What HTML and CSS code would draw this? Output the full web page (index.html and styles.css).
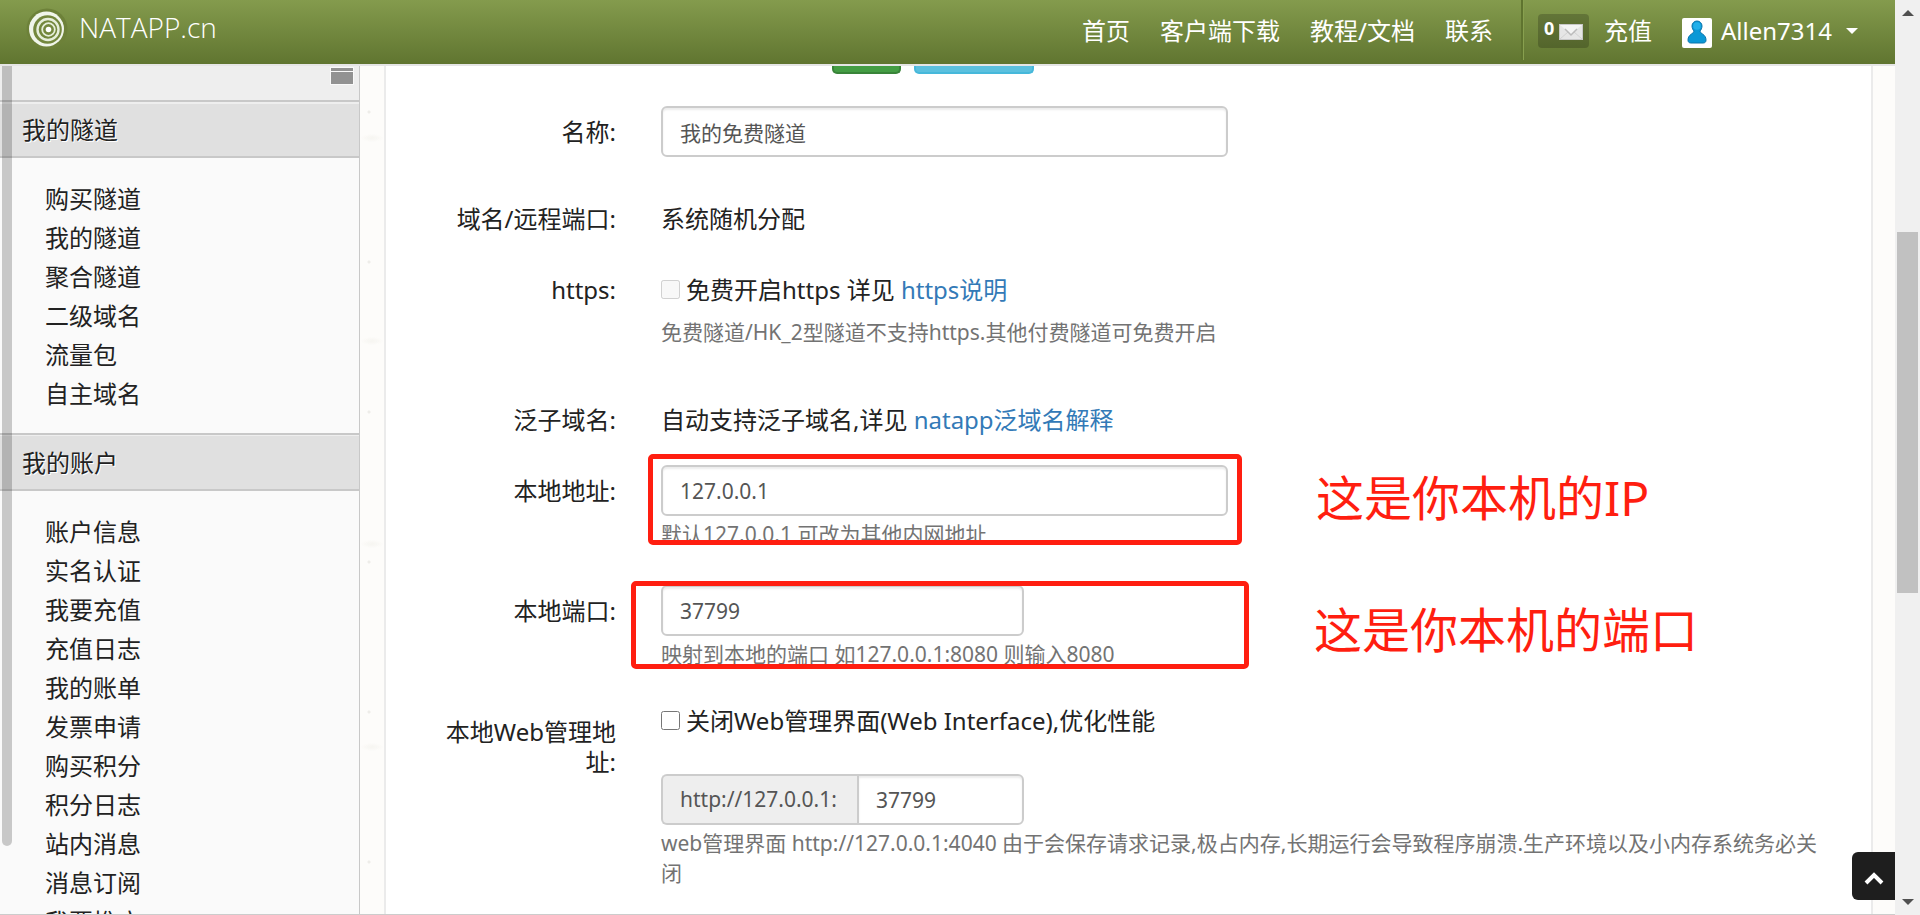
FILE: index.html
```html
<!DOCTYPE html>
<html lang="zh-CN">
<head>
<meta charset="utf-8">
<title>NATAPP.cn</title>
<link rel="stylesheet" href="styles.css">
</head>
<body>
<div class="page">
  <header class="navbar">
    <a class="brand" href="#">
      <svg class="brand-logo" viewBox="0 0 42 42" aria-hidden="true">
        <circle cx="21" cy="21" r="20.5" fill="#6d8139"/>
        <circle cx="20.500" cy="21" r="17.500" fill="#f0f5ea"/>
        <circle cx="21.500" cy="21.500" r="14.300" fill="#73873d"/>
        <circle cx="22" cy="21.500" r="10.500" fill="none" stroke="#e6eedb" stroke-width="2.400"/>
        <circle cx="22.500" cy="21.500" r="6.300" fill="none" stroke="#e6eedb" stroke-width="1.800"/>
        <circle cx="22.500" cy="21.500" r="2.800" fill="#fff"/>
      </svg>
      <span class="brand-name">NATAPP.cn</span>
    </a>
    <nav class="nav-links">
      <a href="#">首页</a>
      <a href="#">客户端下载</a>
      <a href="#">教程/文档</a>
      <a href="#">联系</a>
    </nav>
    <div class="user-area">
      <a class="mail-badge" href="#"><span>0</span>
        <svg class="mail-icon" viewBox="0 0 24 16" aria-hidden="true">
          <rect x="0.500" y="0.500" width="23" height="15" fill="#e6e6e6" stroke="#c8c8c8"/>
          <path d="M1 15 9 8M23 15l-8-7" stroke="#d2d2d2" fill="none"/>
          <path d="M1 1l11 9L23 1z" fill="#f4f4f4"/>
          <path d="M6 5l6 6 6-6" stroke="#bbb" stroke-width="1.500" fill="none"/>
        </svg>
      </a>
      <a class="recharge" href="#">充值</a>
      <button class="user-menu" type="button">
        <svg class="avatar" viewBox="0 0 30 30" aria-hidden="true">
          <rect width="30" height="30" rx="2" fill="#fff"/>
          <path d="M10 8a5 5 0 0 1 10 0c0 2-1 4-2 5 0 3 6 3 6 9 0 2-1 3-3 3H9c-2 0-3-1-3-3 0-6 6-6 6-9-1-1-2-3-2-5z" fill="#0a98d6" stroke="#0874ac"/>
          <circle cx="15" cy="8" r="3.800" fill="#22b0ea"/>
        </svg>
        <span>Allen7314</span>
        <svg class="caret" viewBox="0 0 12 6" aria-hidden="true"><path d="M0 0h12L6 6z" fill="#fff"/></svg>
      </button>
    </div>
  </header>

  <div class="body-row">
    <aside class="sidebar">
      <div class="sidebar-top">
        <svg class="panel-icon" viewBox="0 0 24 18" aria-hidden="true">
          <rect width="24" height="18" fill="#f9f9f9"/>
          <path d="M1 1h22v3H1zM1 5h22v12H1z" fill="#929292"/>
        </svg>
      </div>
      <h2 class="side-title">我的隧道</h2>
      <ul class="side-list">
        <li><a href="#">购买隧道</a></li>
        <li><a href="#">我的隧道</a></li>
        <li><a href="#">聚合隧道</a></li>
        <li><a href="#">二级域名</a></li>
        <li><a href="#">流量包</a></li>
        <li><a href="#">自主域名</a></li>
      </ul>
      <h2 class="side-title ruled">我的账户</h2>
      <ul class="side-list">
        <li><a href="#">账户信息</a></li>
        <li><a href="#">实名认证</a></li>
        <li><a href="#">我要充值</a></li>
        <li><a href="#">充值日志</a></li>
        <li><a href="#">我的账单</a></li>
        <li><a href="#">发票申请</a></li>
        <li><a href="#">购买积分</a></li>
        <li><a href="#">积分日志</a></li>
        <li><a href="#">站内消息</a></li>
        <li><a href="#">消息订阅</a></li>
        <li><a href="#">我要推广</a></li>
      </ul>
      <div class="side-thumb"></div>
    </aside>

    <main class="content">
      <form class="form">
        <div class="top-buttons">
          <button class="btn btn-green" type="button" aria-label="付费"></button>
          <button class="btn btn-blue" type="button" aria-label="购买"></button>
        </div>

        <div class="row row-name">
          <label class="label label-input" for="name">名称:</label>
          <div class="field"><input class="text wide" id="name" type="text" value="我的免费隧道"></div>
        </div>

        <div class="row row-domain">
          <span class="label">域名/远程端口:</span>
          <div class="field">系统随机分配</div>
        </div>

        <div class="row row-https">
          <label class="label" for="https">https:</label>
          <div class="field">
            <div class="check"><input id="https" type="checkbox" disabled><span>免费开启https 详见 <a href="#">https说明</a></span></div>
            <p class="help help-far">免费隧道/HK_2型隧道不支持https.其他付费隧道可免费开启</p>
          </div>
        </div>

        <div class="row row-wild">
          <span class="label">泛子域名:</span>
          <div class="field">自动支持泛子域名,详见 <a href="#">natapp泛域名解释</a></div>
        </div>

        <div class="row row-addr">
          <label class="label label-input" for="addr">本地地址:</label>
          <div class="field">
            <input class="text wide" id="addr" type="text" value="127.0.0.1">
            <p class="help">默认127.0.0.1 可改为其他内网地址</p>
            <div class="mark mark-addr"></div>
            <div class="note note-addr">这是你本机的IP</div>
          </div>
        </div>

        <div class="row row-port">
          <label class="label label-input" for="port">本地端口:</label>
          <div class="field">
            <input class="text narrow" id="port" type="text" value="37799">
            <p class="help">映射到本地的端口 如127.0.0.1:8080 则输入8080</p>
            <div class="mark mark-port"></div>
            <div class="note note-port">这是你本机的端口</div>
          </div>
        </div>

        <div class="row row-web">
          <label class="label label-input" for="webport">本地Web管理地址:</label>
          <div class="field">
            <div class="check"><input id="noweb" type="checkbox"><label for="noweb">关闭Web管理界面(Web Interface),优化性能</label></div>
            <div class="group narrow">
              <span class="addon">http://127.0.0.1:</span>
              <input class="text" id="webport" type="text" value="37799">
            </div>
            <p class="help">web管理界面 http://127.0.0.1:4040 由于会保存请求记录,极占内存,长期运行会导致程序崩溃.生产环境以及小内存系统务必关闭</p>
          </div>
        </div>
      </form>
    </main>
    <button class="to-top" type="button" aria-label="返回顶部">
      <svg viewBox="0 0 20 14" aria-hidden="true"><path d="M2 12l8-8 8 8" fill="none" stroke="#fff" stroke-width="4"/></svg>
    </button>
  </div>
</div>
<div class="scrollbar">
  <svg class="arrow" viewBox="0 0 12 6" aria-hidden="true"><path d="M0 6h12L6 0z" fill="#505050"/></svg>
  <div class="thumb"></div>
  <svg class="arrow" viewBox="0 0 12 6" aria-hidden="true"><path d="M0 0h12L6 6z" fill="#505050"/></svg>
</div>
</body>
</html>
```
FILE: styles.css
```css
* { box-sizing: border-box; }

body {
  margin: 0;
  height: 100vh;
  display: flex;
  overflow: hidden;
  background: #fff;
  color: #222;
  font: 24px/30px "Noto Sans", "Noto Sans CJK SC", sans-serif;
}
a { color: #337ab7; text-decoration: none; }
button { font: inherit; }

.page {
  flex: 1;
  min-width: 0;
  display: flex;
  flex-direction: column;
  border-bottom: 1px solid #ccc;
}

/* Top bar */
.navbar {
  flex: none;
  height: 66px;
  display: flex;
  align-items: flex-start;
  background: linear-gradient(#849b4d, #607530);
  border-bottom: 2px solid #e5e5e5;
  background-clip: padding-box;
}
.navbar a, .user-menu { color: #fff; }
.brand { display: flex; padding: 8px 0 0 26px; gap: 11px; }
.brand-logo { width: 42px; height: 42px; }
.brand-name { font-family: "Open Sans", sans-serif; font-size: 28px; font-weight: 300; line-height: 38px; }
.nav-links { display: flex; gap: 30px; margin-left: auto; padding: 16px 28px 0 0; }
.user-area {
  display: flex;
  height: 60px;
  padding: 14px 37px 0 15px;
  border-left: 2px solid #5f742f;
  box-shadow: inset 1px 0 #88a04f;
}
.mail-badge {
  display: flex;
  gap: 5px;
  width: 51px;
  height: 34px;
  padding: 0 6px;
  border-radius: 4px;
  background: rgba(0, 0, 0, .2);
  font-size: 18px;
  font-weight: 700;
  line-height: 29px;
}
.mail-icon { flex: none; width: 24px; height: 16px; margin-top: 10px; }
.recharge { padding: 2px 0 0 15px; }
.user-menu {
  display: flex;
  align-items: center;
  height: 34px;
  margin-left: 30px;
  padding: 0;
  border: 0;
  background: none;
}
.avatar { width: 30px; height: 30px; margin: 4px 9px 0 0; }
.caret { width: 12px; height: 6px; margin-left: 14px; }

/* Sidebar */
.body-row { flex: 1; min-height: 0; display: flex; position: relative; }
.sidebar {
  flex: none;
  width: 360px;
  position: relative;
  overflow: hidden;
  border-right: 1px solid #c8c8c8;
  background: #fafafa;
}
.sidebar-top {
  display: flex;
  justify-content: flex-end;
  height: 36px;
  padding: 1px 5px 0 0;
  background: #eee;
  border-bottom: 2px solid #c8c8c8;
}
.panel-icon { width: 24px; height: 18px; }
.side-title {
  margin: 0;
  padding: 12px 22px;
  border-top: 2px solid #eee;
  border-bottom: 2px solid #c8c8c8;
  background: #e0e0e0;
  font-size: 24px;
  font-weight: 400;
  line-height: 28px;
  text-shadow: 1px 1px #fff;
}
.ruled { border-top: 2px solid #c8c8c8; box-shadow: inset 0 1px #eee; padding: 14px 22px 12px; }
.side-list { margin: 0; padding: 21px 45px 20px; list-style: none; line-height: 39px; }
.side-list a { color: #222; }
.side-thumb {
  position: absolute;
  left: 2px;
  top: 0;
  width: 10px;
  height: 92%;
  border-radius: 0 0 5px 5px;
  background: rgba(0, 0, 0, .2);
}

/* Main form */
.content {
  flex: 1;
  min-width: 0;
  padding: 0 22px 0 24px;
  overflow: hidden;
  background:
    radial-gradient(circle at 9px 46px, #eeede9 0 1px, transparent 2px) 0 0 / 367px 150px,
    radial-gradient(ellipse at 12px 72px, #f7f6f2 0 2px, transparent 11px) 0 0 / 367px 203px,
    #fdfcfa;
}
.form {
  height: 100%;
  min-height: 848px;
  padding: 0 36px 0 44px;
  background: #fff;
  border: solid #ebebeb;
  border-width: 0 2px;
}
.top-buttons { display: flex; gap: 13px; height: 8px; padding-left: 402px; }
.btn { height: 8px; padding: 0; border: solid; border-width: 0 2px 2px; border-radius: 0 0 5px 5px; }
.btn-green { width: 69px; background: #449d44; border-color: #398439; }
.btn-blue { width: 120px; background: #5bc0de; border-color: #46b8da; }

.row { display: grid; grid-template-columns: 186px minmax(0, 1fr); column-gap: 45px; }
.row-name { margin-top: 32px; }
.row-domain { margin-top: 47px; }
.row-https { margin-top: 41px; }
.row-wild { margin-top: 58px; }
.row-addr { margin-top: 30px; }
.row-port { margin-top: 36px; }
.row-web { margin-top: 37px; }
.label { text-align: right; word-break: break-all; }
.label-input { padding-top: 11px; }
.field { position: relative; }

.text, .addon {
  height: 51px;
  padding: 0 17px;
  border: 2px solid #ccc;
  border-radius: 6px;
  color: #555;
  font: 21px/30px "Noto Sans", "Noto Sans CJK SC", sans-serif;
}
.text { display: block; background: #fff; box-shadow: inset 0 2px 2px rgba(0, 0, 0, .08); }
.wide { width: 567px; max-width: 100%; }
.narrow { width: 363px; max-width: 100%; }
.group { display: flex; margin-top: 38px; }
.addon { flex: none; padding-right: 20px; border-right: 0; border-radius: 6px 0 0 6px; background: #eee; line-height: 46px; }
.group .text { flex: 1; min-width: 0; border-radius: 0 6px 6px 0; }

.check { display: flex; }
.check input { width: 19px; height: 19px; margin: 5px 6px 0 0; }
.help { margin: 3px 0 0; color: #737373; font-size: 21px; line-height: 30px; }
.help-far { margin-top: 12px; }

/* Callouts drawn over the form */
.mark { position: absolute; border: 5px solid #ff1e10; border-radius: 5px; }
.mark-addr { left: -13px; top: -11px; width: 594px; height: 91px; }
.mark-port { left: -30px; top: -4px; width: 618px; height: 88px; }
.note { position: absolute; color: #ff1e10; font-size: 48px; line-height: 64px; white-space: nowrap; }
.note-addr { left: 655px; top: 1px; }
.note-port { left: 653px; top: 13px; }

.to-top {
  position: absolute;
  right: 0;
  bottom: 14px;
  width: 43px;
  height: 48px;
  padding: 0;
  border: 0;
  border-radius: 6px 0 0 6px;
  background: #1e1e1e;
}
.to-top svg { width: 20px; height: 14px; }

/* Window scrollbar */
.scrollbar {
  flex: none;
  width: 25px;
  display: flex;
  flex-direction: column;
  align-items: center;
  padding: 10px 0;
  background: #f0f0f0;
}
.arrow { flex: none; width: 12px; height: 6px; }
.thumb { width: 21px; height: 361px; margin: 216px 0 auto; background: #c1c1c1; }
```
